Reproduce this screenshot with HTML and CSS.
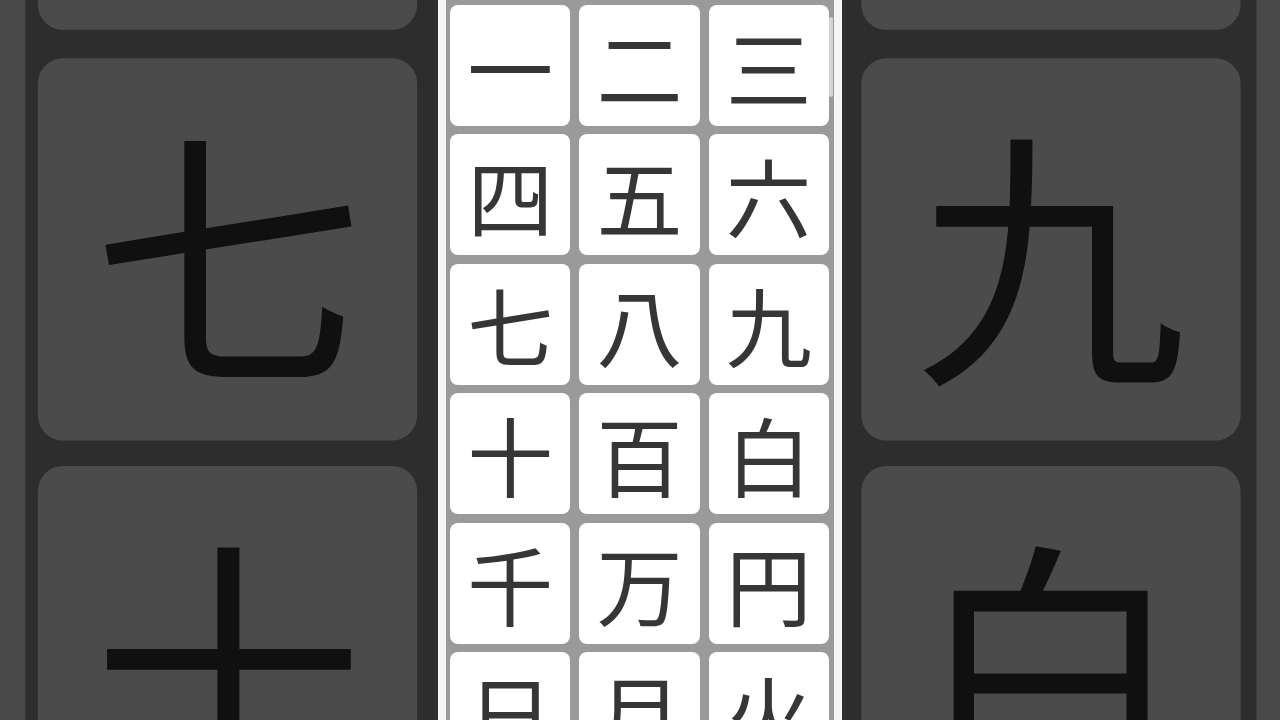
FILE: index.html
```html
<!DOCTYPE html>
<html lang="ja">
<head>
    <meta charset="UTF-8">
    <title>漢字</title>
    <link rel="stylesheet" href="styles.css">
</head>
<body>
    <div class="side left">
        <div class="shot"></div>
    </div>
    <div class="phone">
        <div class="screen" id="screen">
            <ul class="grid">
                <li>一</li>
                <li>二</li>
                <li>三</li>
                <li>四</li>
                <li>五</li>
                <li>六</li>
                <li>七</li>
                <li>八</li>
                <li>九</li>
                <li>十</li>
                <li>百</li>
                <li>白</li>
                <li>千</li>
                <li>万</li>
                <li>円</li>
                <li>日</li>
                <li>月</li>
                <li>火</li>
            </ul>
        </div>
        <div class="thumb"></div>
    </div>
    <div class="side right">
        <div class="shot"></div>
    </div>

    <script>
        // 两边是中间画面放大后的暗色背景
        var screen = document.getElementById("screen");
        var shots = document.getElementsByClassName("shot");
        for (var i = 0; i < shots.length; i++) {
            var copy = screen.cloneNode(true);
            copy.removeAttribute("id");
            shots[i].appendChild(copy);
        }
    </script>
</body>
</html>
```

FILE: styles.css
```css
* {
    margin: 0;
    padding: 0;
}
ul {
    list-style: none;
}
body {
    display: flex;
    width: 1280px;
    height: 720px;
    overflow: hidden;
    background-color: #2d2e2c;
    font-family: "Noto Sans CJK JP", "Noto Sans CJK SC", sans-serif;
}
.side {
    width: 438px;
    height: 720px;
    overflow: hidden;
    flex-shrink: 0;
}
.shot {
    width: 404px;
    transform-origin: 0 0;
    filter: brightness(0.295);
}
.left .shot {
    transform: translate(0, -776px) scale(3.16);
}
.right .shot {
    transform: translate(-837px, -776px) scale(3.16);
}
.phone {
    position: relative;
    width: 404px;
    height: 720px;
    overflow: hidden;
    flex-shrink: 0;
}
.screen {
    width: 404px;
    height: 720px;
    padding: 0 8px;
    box-sizing: border-box;
    background-color: #f4f6f5;
    overflow: hidden;
}
.grid {
    display: grid;
    grid-template-columns: repeat(3, 120.33px);
    grid-auto-rows: 121px;
    column-gap: 9px;
    row-gap: 8.4px;
    height: 800px;
    padding: 5px 5px 0 4px;
    background-color: #999a99;
}
.grid li {
    display: flex;
    align-items: center;
    justify-content: center;
    background-color: #fff;
    border-radius: 8px;
    color: #363636;
    font-size: 86px;
    line-height: 1;
}
/* 右边的滚动条 */
.thumb {
    position: absolute;
    top: 17px;
    right: 9px;
    width: 4px;
    height: 80px;
    border-radius: 2px;
    background-color: rgba(235, 235, 235, 0.7);
}
```
